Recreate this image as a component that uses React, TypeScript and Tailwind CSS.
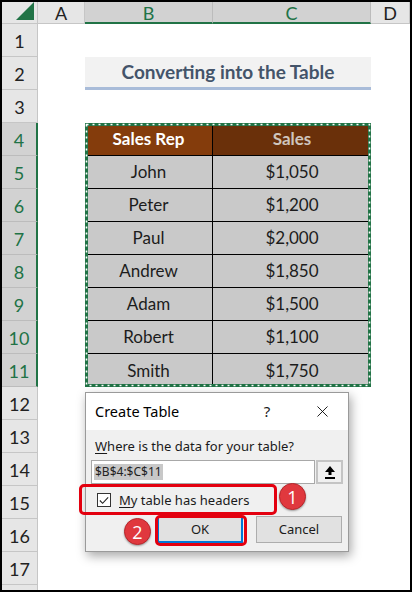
import { X } from "lucide-react";

const columns = ["A", "B", "C", "D"];
const rows = Array.from({ length: 17 }, (_, i) => i + 1);

const salesData = [
  { rep: "John", sales: "$1,050" },
  { rep: "Peter", sales: "$1,200" },
  { rep: "Paul", sales: "$2,000" },
  { rep: "Andrew", sales: "$1,850" },
  { rep: "Adam", sales: "$1,500" },
  { rep: "Robert", sales: "$1,100" },
  { rep: "Smith", sales: "$1,750" },
];

const isSelectedRow = (r: number) => r >= 4 && r <= 11;

function CollapseIcon() {
  return (
    <svg width="12" height="14" viewBox="0 0 12 14">
      <path d="M6 1 L11 7 L7.5 7 L7.5 10 L4.5 10 L4.5 7 L1 7 Z" fill="#000" />
      <rect x="1" y="12" width="10" height="2" fill="#000" />
    </svg>
  );
}

function CheckMark() {
  return (
    <svg width="13" height="13" viewBox="0 0 13 13">
      <path d="M2 6.5 L5 9.5 L11 3" fill="none" stroke="#222" strokeWidth="1.2" />
    </svg>
  );
}

function Badge({ n, className }: { n: number; className: string }) {
  return (
    <div
      className={`absolute w-[27px] h-[27px] rounded-full bg-[#e0383e] border border-[#b8262b] flex items-center justify-center text-white text-[18px] leading-none shadow-[0_1px_2px_rgba(0,0,0,0.35)] ${className}`}
      style={{ fontFamily: "'Open Sans', sans-serif" }}
    >
      {n}
    </div>
  );
}

function CreateTableDialog() {
  return (
    <div
      className="absolute left-[83px] top-[390px] w-[264px] h-[160px] border border-[#9a9a9a] bg-[#f0f0f0] shadow-[2px_4px_10px_rgba(0,0,0,0.35)] flex flex-col text-[13px] text-[#1a1a1a]"
      style={{ fontFamily: "'Noto Sans', 'Open Sans', sans-serif" }}
    >
      <div className="h-[37px] bg-white flex items-center pl-[9px] shrink-0">
        <span className="text-[14.5px] text-black">Create Table</span>
        <span className="ml-auto text-[15px] w-[20px] text-center mr-[36px]">?</span>
        <X size={19} strokeWidth={1.1} className="mr-[16px] text-black" />
      </div>
      <div className="flex flex-col px-[5px] pt-[7px]">
        <div className="h-[18px] leading-[18px] pl-[4px]">
          <span className="underline underline-offset-2">W</span>here is the data for your table?
        </div>
        <div className="mt-[5px] flex h-[24px]">
          <div className="w-[227px] h-full bg-white border border-[#a8a8a8] flex items-center pl-[2px]">
            <span className="bg-[#c8c8c8] text-[12px] leading-[16px] px-[1px] text-[#222]">$B$4:$C$11</span>
          </div>
          <div className="w-[27px] h-full ml-[1px] bg-[#f0f0f0] border-2 border-[#c4c4c4] flex items-center justify-center">
            <CollapseIcon />
          </div>
        </div>
        <div className="mt-[2px] h-[28px] flex items-center pl-[6px]">
          <div className="w-[14px] h-[14px] bg-white border border-[#333] flex items-center justify-center">
            <CheckMark />
          </div>
          <span className="ml-[8px] mt-[2px]">
            <span className="underline underline-offset-2">M</span>y table has headers
          </span>
        </div>
        <div className="mt-[2px] flex justify-end gap-[13px] pr-[1px]">
          <div className="w-[86px] h-[27px] bg-[#e1e1e1] border-2 border-[#0078d7] flex items-center justify-center">
            OK
          </div>
          <div className="w-[86px] h-[27px] bg-[#e1e1e1] border border-[#adadad] flex items-center justify-center">
            Cancel
          </div>
        </div>
      </div>
    </div>
  );
}

function SalesTable() {
  return (
    <div className="relative col-start-3 col-end-5 row-start-5 row-end-13 bg-white">
      <div className="grid grid-cols-[128px_158px] grid-rows-[repeat(8,33px)] text-[17px]">
        <div className="bg-[#843c0c] text-white font-bold flex items-center justify-center border-r border-b border-black">
          Sales Rep
        </div>
        <div className="bg-[#6a300a] text-[#cfc5bd] font-bold flex items-center justify-center border-b border-black">
          Sales
        </div>
        {salesData.map((row, i) => (
          <div key={row.rep} className="contents">
            <div
              className={`bg-[#c9c9c9] text-[#1c1c1c] flex items-center justify-center border-r border-black ${i < salesData.length - 1 ? "border-b" : ""}`}
            >
              {row.rep}
            </div>
            <div
              className={`bg-[#c9c9c9] text-[#1c1c1c] flex items-center justify-center border-black ${i < salesData.length - 1 ? "border-b" : ""}`}
            >
              {row.sales}
            </div>
          </div>
        ))}
      </div>
      {/* copy selection marquee: green frame with white dashes */}
      <svg className="absolute inset-0 w-full h-full pointer-events-none" preserveAspectRatio="none">
        <rect x="1.5" y="1.5" width="calc(100% - 3px)" height="calc(100% - 3px)" fill="none" stroke="#217346" strokeWidth="3" />
        <rect
          x="1.5"
          y="1.5"
          width="calc(100% - 3px)"
          height="calc(100% - 3px)"
          fill="none"
          stroke="#fff"
          strokeWidth="1.6"
          strokeDasharray="2 4"
        />
      </svg>
    </div>
  );
}

export default function App() {
  return (
    <div
      className="relative w-[412px] h-[592px] border-2 border-black bg-white overflow-hidden"
      style={{ fontFamily: "Lato, 'Liberation Sans', sans-serif" }}
    >
      <div className="grid grid-cols-[36px_47px_128px_158px_1fr] grid-rows-[22px_repeat(17,33px)_1fr] h-full">
        {/* corner */}
        <div className="bg-[#e6e6e6] border-r border-b border-[#c6c6c6] relative">
          <svg className="absolute right-[3px] bottom-[3px]" width="18" height="18" viewBox="0 0 18 18">
            <path d="M18 0 L18 18 L0 18 Z" fill="#217346" />
          </svg>
        </div>
        {columns.map((c) => {
          const sel = c === "B" || c === "C";
          return (
            <div
              key={c}
              className={`flex items-center justify-center text-[18px] leading-none pt-[1px] border-r ${
                sel
                  ? "bg-[#d2d2d2] text-[#217346] border-b-2 border-b-[#217346] border-r-[#bcbcbc]"
                  : "bg-[#e6e6e6] text-[#222] border-b border-b-[#c6c6c6] border-r-[#c6c6c6]"
              }`}
            >
              {c}
            </div>
          );
        })}

        {rows.map((r) => {
          const sel = isSelectedRow(r);
          return (
            <div
              key={r}
              style={{ gridRow: r + 1, gridColumn: 1 }}
              className={`flex items-center justify-center text-[18px] leading-none pt-[2px] border-b ${
                sel
                  ? "bg-[#d2d2d2] text-[#217346] border-r-2 border-r-[#217346] border-b-[#bcbcbc]"
                  : "bg-[#e6e6e6] text-[#222] border-r border-r-[#c6c6c6] border-b-[#c6c6c6]"
              }`}
            >
              {r}
            </div>
          );
        })}
        <div className="row-start-19 col-start-1 bg-[#e6e6e6] border-r border-[#c6c6c6]" />

        {/* title cell B2:C2 */}
        <div className="row-start-3 col-start-3 col-end-5 bg-[#f2f2f2] border-b-[3px] border-[#a9bcd9] flex items-center justify-center">
          <span className="text-[19px] font-bold text-[#44546a]">Converting into the Table</span>
        </div>

        <SalesTable />
      </div>

      <CreateTableDialog />

      {/* annotations */}
      <div className="absolute left-[77px] top-[482px] w-[198px] h-[31px] border-[3px] border-[#e3000f] rounded-[5px]" />
      <div className="absolute left-[153px] top-[513px] w-[92px] h-[31px] border-[3px] border-[#e3000f] rounded-[5px]" />
      <Badge n={1} className="left-[277px] top-[481px]" />
      <Badge n={2} className="left-[122px] top-[516px]" />
    </div>
  );
}
